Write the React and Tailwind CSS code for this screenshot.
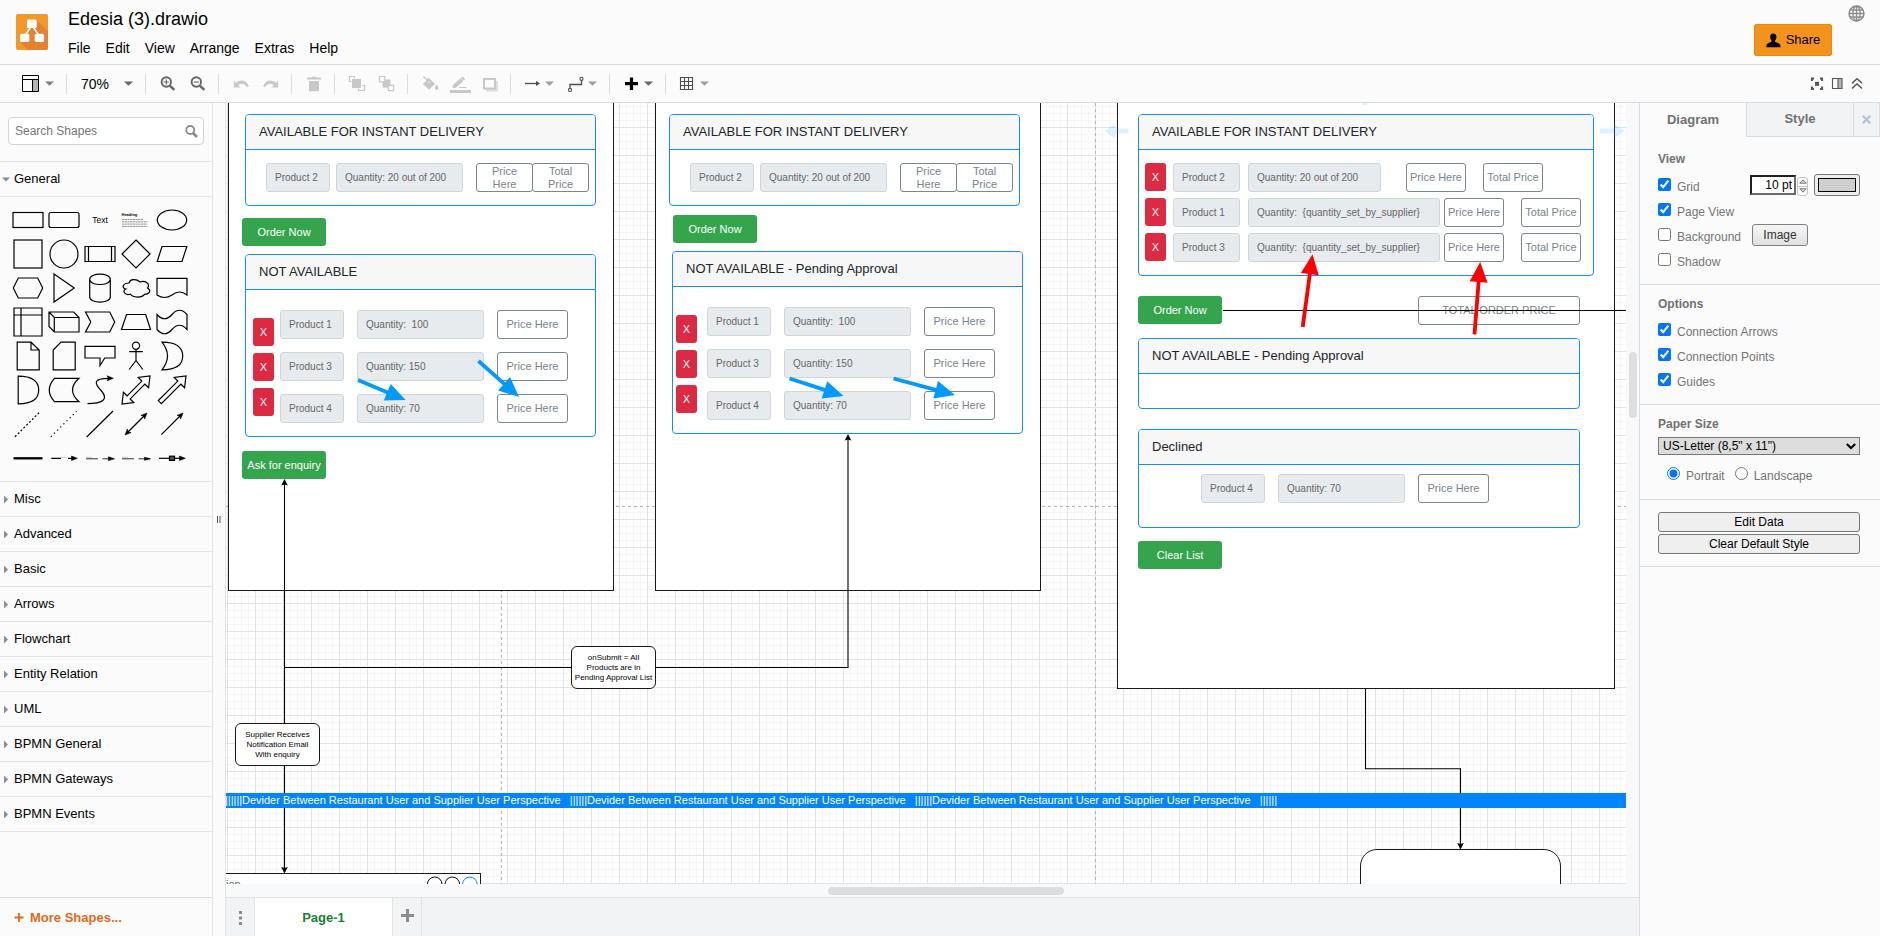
import React from "react";

/* ---------- small shared pieces ---------- */

function Caret({ className = "text-[#808080]" }) {
  return (
    <svg width="9" height="5" viewBox="0 0 9 5" className={className} aria-hidden="true">
      <path d="M0 0.5H9L4.5 4.8Z" fill="currentColor" />
    </svg>
  );
}

function Icon({ children, className = "text-[#666666]" }) {
  return (
    <svg width="16" height="16" viewBox="0 0 16 16" className={`shrink-0 overflow-visible ${className}`} fill="none" stroke="currentColor" aria-hidden="true">
      {children}
    </svg>
  );
}

/* ---------- header ---------- */

function Logo() {
  return (
    <svg width="32" height="36" viewBox="0 0 32 36" aria-hidden="true">
      <rect width="32" height="36" rx="2" fill="#f2992b" />
      <path d="M20.5 6L32 17.5V34a2 2 0 0 1-2 2H12L4.5 28.2L13 20L12 14Z" fill="#e5812f" />
      <path d="M14.8 13L9 21.5M17.2 13L23 21.5" stroke="#fff" strokeWidth="1.7" />
      <rect x="11" y="5.5" width="9.8" height="8.6" rx="1.6" fill="#fff" />
      <rect x="4" y="19.8" width="9.4" height="8.2" rx="1.6" fill="#fff" />
      <rect x="18.7" y="19.8" width="9.4" height="8.2" rx="1.6" fill="#fff" />
    </svg>
  );
}

function Header() {
  return (
    <header className="flex h-[65px] shrink-0 items-start border-b border-[#dadce0] bg-[#fbfbfb]">
      <div className="pl-4 pt-[14px]">
        <Logo />
      </div>
      <div className="pl-5 pt-2">
        <h1 className="text-[18px] leading-[22px] text-black">Edesia (3).drawio</h1>
        <nav className="mt-[9px] flex gap-[15px] text-sm leading-[18px] text-black">
          {["File", "Edit", "View", "Arrange", "Extras", "Help"].map((m) => (
            <button key={m} type="button">{m}</button>
          ))}
        </nav>
      </div>
      <div className="ml-auto flex pr-[15px]">
        <button type="button" className="mt-6 flex h-8 w-[78px] items-center justify-center gap-[5px] rounded-[2px] border border-[#f08705] bg-[#f2931e] text-[13px] text-black">
          <svg width="15" height="15" viewBox="0 0 15 15" aria-hidden="true">
            <path d="M7.3 0.4C9.4 0.4 10.5 2 10.4 4.2C10.3 6 9.6 7 9 7.8V8.8C10 9.6 14.4 10 14.4 12.6V14.3H0.4V12.6C0.4 10 4.8 9.6 5.7 8.8V7.8C5 7 4.3 6 4.2 4.2C4.1 2 5.2 0.4 7.3 0.4Z" fill="#000" />
          </svg>
          <span>Share</span>
        </button>
        <button type="button" aria-label="Language" className="mt-[5px] ml-4 h-[17px] text-[#8c8c8c]">
          <svg width="17" height="17" viewBox="0 0 17 17" fill="none" stroke="currentColor" strokeWidth="1.3" aria-hidden="true">
            <circle cx="8.5" cy="8.5" r="7.4" strokeWidth="1.6" />
            <ellipse cx="8.5" cy="8.5" rx="3.6" ry="7.4" />
            <path d="M8.5 1V16M1 8.5H16M2.3 5H14.7M2.3 12H14.7" />
          </svg>
        </button>
      </div>
    </header>
  );
}

/* ---------- toolbar ---------- */

function Group({ children, last }) {
  return (
    <div className={`flex h-5 items-center gap-[14px] pl-[14px] pr-3 ${last ? "" : "border-r border-[#dadce0]"}`}>{children}</div>
  );
}

function ToolButton({ label, children }) {
  return (
    <button type="button" aria-label={label} className="flex w-4 items-center justify-center">{children}</button>
  );
}

function MenuButton({ label, children, caret }) {
  return (
    <button type="button" aria-label={label} className="flex w-[29px] items-center justify-between">
      {children}
      <Caret className={caret} />
    </button>
  );
}

function Toolbar() {
  const off = "text-[#c8c8c8]";
  return (
    <div className="flex h-[38px] shrink-0 items-center border-b border-[#dadce0] bg-[#fbfbfb]">
      <div className="flex h-5 items-center border-r border-[#dadce0] pl-[22px] pr-3">
        <button type="button" aria-label="View" className="flex w-8 items-center justify-between">
          <svg width="17" height="17" viewBox="0 0 17 17" aria-hidden="true">
            <rect x="10.5" y="4" width="6" height="12.5" fill="#b3b3b3" />
            <path d="M0.5 0.5H16.5V16.5H0.5ZM0.5 4.5H16.5M10.5 4.5V16.5" fill="none" stroke="#000" />
          </svg>
          <Caret />
        </button>
      </div>
      <div className="flex h-5 items-center border-r border-[#dadce0] pl-[14px] pr-3">
        <button type="button" className="flex w-[52px] items-center justify-between text-sm text-black">
          <span>70%</span>
          <Caret className="text-[#666666]" />
        </button>
      </div>
      <Group>
        <ToolButton label="Zoom In">
          <Icon>
            <circle cx="6.3" cy="6" r="4.7" strokeWidth="1.9" />
            <path d="M10 9.8L14.3 13.9" strokeWidth="2.5" />
            <path d="M3.8 6H8.8M6.3 3.5V8.5" strokeWidth="1.1" />
          </Icon>
        </ToolButton>
        <ToolButton label="Zoom Out">
          <Icon>
            <circle cx="6.3" cy="6" r="4.7" strokeWidth="1.9" />
            <path d="M10 9.8L14.3 13.9" strokeWidth="2.5" />
            <path d="M3.8 6H8.8" strokeWidth="1.1" />
          </Icon>
        </ToolButton>
      </Group>
      <Group>
        <ToolButton label="Undo">
          <Icon className={off}>
            <path d="M0.8 4.5L3 6.8C7 3.2 13.4 3.8 15.8 10.2L13.9 11C12 7.4 8 6.6 5.2 9.2L7.6 11.5H0.8Z" fill="currentColor" stroke="none" />
          </Icon>
        </ToolButton>
        <ToolButton label="Redo">
          <Icon className={off}>
            <path d="M15.2 4.5L13 6.8C9 3.2 2.6 3.8 0.2 10.2L2.1 11C4 7.4 8 6.6 10.8 9.2L8.4 11.5H15.2Z" fill="currentColor" stroke="none" />
          </Icon>
        </ToolButton>
      </Group>
      <Group>
        <ToolButton label="Delete">
          <Icon className={off}>
            <path d="M6 0.8H10L10.6 1.6H15V3.6H1V1.6H5.4ZM3 5H13V15.2H3Z" fill="currentColor" stroke="none" />
          </Icon>
        </ToolButton>
      </Group>
      <Group>
        <ToolButton label="To Front">
          <Icon className={off}>
            <path d="M5.5 2.5V0.5H0.5V5.5H2.5M13 9.5H15.5V14.5H9.5V12.5" strokeWidth="1.2" />
            <rect x="3" y="3" width="9" height="9" fill="currentColor" stroke="none" />
          </Icon>
        </ToolButton>
        <ToolButton label="To Back">
          <Icon className={off}>
            <path d="M3.5 3.5H11.5V11.5H3.5Z" fill="currentColor" stroke="none" />
            <path d="M0.5 0.5H5.8V5.8H0.5ZM9.3 9.3H14.6V14.6H9.3Z" fill="#fbfbfb" strokeWidth="1.2" />
          </Icon>
        </ToolButton>
      </Group>
      <Group>
        <ToolButton label="Fill Color">
          <Icon className={off}>
            <path d="M0.8 8L7.2 2.2L13 8L7 13.6Z" fill="currentColor" stroke="none" />
            <path d="M1.5 0.5L7.2 6.4M4.5 5L7 2.2" strokeWidth="1.3" />
            <path d="M6 5.4L7.6 7" stroke="#fbfbfb" />
            <path d="M14.6 8.6C15.6 10.2 16.4 11 16.4 12A1.8 1.8 0 0 1 12.8 12C12.8 11 13.6 10.2 14.6 8.6Z" fill="currentColor" stroke="none" />
          </Icon>
        </ToolButton>
        <ToolButton label="Line Color">
          <Icon className={off}>
            <path d="M0.8 12V9.3L10.5 0.6L13.2 3.2L3.6 12Z" fill="currentColor" stroke="none" />
            <path d="M8.4 2L12 5.4" stroke="#fbfbfb" strokeWidth="0.8" />
            <path d="M7 11.5H14.5" />
            <path d="M-2 15.5H19" strokeWidth="3" />
          </Icon>
        </ToolButton>
        <ToolButton label="Shadow">
          <Icon className={off}>
            <path d="M13.5 5H16V15.5H4V13H13.5Z" fill="#dedede" stroke="none" />
            <rect x="2" y="3" width="11" height="9.5" strokeWidth="2" />
          </Icon>
        </ToolButton>
      </Group>
      <Group>
        <MenuButton label="Connection" caret="text-[#9f9f9f]">
          <Icon className="text-[#4d4d4d]">
            <path d="M0 7.5H12" strokeWidth="1.3" />
            <path d="M11 5L15 7.5L11 10Z" fill="currentColor" stroke="none" />
          </Icon>
        </MenuButton>
        <MenuButton label="Waypoints" caret="text-[#9f9f9f]">
          <Icon className="text-[#4d4d4d]">
            <path d="M2 13V8.5H13.5V4" strokeWidth="1.3" />
            <path d="M0.6 12.6H3.4V15.4H0.6ZM12.1 1.4H14.9V4.2H12.1Z" />
          </Icon>
        </MenuButton>
      </Group>
      <Group>
        <MenuButton label="Insert" caret="text-[#666666]">
          <Icon className="text-black">
            <path d="M7.5 1.5V14M1 7.7H14" strokeWidth="3.2" />
          </Icon>
        </MenuButton>
      </Group>
      <Group last>
        <MenuButton label="Table" caret="text-[#9f9f9f]">
          <Icon className="text-[#4d4d4d]">
            <path d="M0.5 1.5H12.5V13.5H0.5ZM0.5 5.5H12.5M0.5 9.5H12.5M4.5 1.5V13.5M8.5 1.5V13.5" strokeWidth="1.1" />
          </Icon>
        </MenuButton>
      </Group>
      <div className="ml-auto flex items-center gap-1 pr-[15px]">
        <ToolButton label="Fullscreen">
          <Icon className="text-[#555555]">
            <path d="M5 2.5H2.9V5M11 2.5H13.1V5M5 13H2.9V10.5M11 13H13.1V10.5" strokeWidth="2" />
            <rect x="6" y="5.8" width="4" height="4" fill="currentColor" stroke="none" />
          </Icon>
        </ToolButton>
        <ToolButton label="Format Panel">
          <Icon className="text-[#555555]">
            <rect x="9" y="2.5" width="4" height="10" fill="#b8b8b8" stroke="none" />
            <path d="M3.5 2.5H13V12.5H3.5ZM9 2.5V12.5" strokeWidth="1.1" />
          </Icon>
        </ToolButton>
        <ToolButton label="Collapse">
          <Icon className="text-[#555555]">
            <path d="M3 7.2L8 2.7L13 7.2M3 12.5L8 8L13 12.5" strokeWidth="1.5" />
          </Icon>
        </ToolButton>
      </div>
    </div>
  );
}

/* ---------- left shape library ---------- */

const heads = { fill: "#000", strokeWidth: 0.6 };

const shapes = [
  ["Rectangle", <rect x="-15" y="-7.5" width="30" height="15" />],
  ["Rounded Rectangle", <rect x="-15" y="-7.5" width="30" height="15" rx="2" />],
  ["Text", <text x="0" y="3" textAnchor="middle" fontSize="8.5" fill="#000" stroke="none">Text</text>],
  ["Textbox", <g>
    <text x="-14.5" y="-4.5" fontSize="4" fontWeight="bold" fill="#000" stroke="none">Heading</text>
    <path d="M-14 -0.5H7.5M-14 1.8H11.5M-14 4.1H11M-14 6.4H11.5" stroke="#777" strokeWidth="0.8" strokeDasharray="2.2 0.5" />
  </g>],
  ["Ellipse", <ellipse rx="14.7" ry="10" />],
  ["Square", <rect x="-14" y="-14" width="28" height="28" />],
  ["Circle", <circle r="14" />],
  ["Process", <path d="M-15 -7.5H15V7.5H-15ZM-11.5 -7.5V7.5M11.5 -7.5V7.5" />],
  ["Diamond", <path d="M0 -14L14 0L0 14L-14 0Z" />],
  ["Parallelogram", <path d="M-10 -7.5H14.8L10 7.5H-14.8Z" />],
  ["Hexagon", <path d="M-9.7 -10H9.7L14.7 0L9.7 10H-9.7L-14.7 0Z" />],
  ["Triangle", <path d="M-10 -14L10.3 0L-10 14Z" />],
  ["Cylinder", <path d="M-10.3 -8.7C-10.3 -15.5 10.3 -15.5 10.3 -8.7V9C10.3 15.7 -10.3 15.7 -10.3 9ZM-10.3 -8.7C-10.3 -1.8 10.3 -1.8 10.3 -8.7" />],
  ["Cloud", <path d="M-7 -5C-13 -5 -15 0 -10.2 1C-15 3.2 -9.6 8 -5.7 6C-3 10 6 10 8.5 6.3C14.5 6 15 2 11.5 0C15 -4 9 -8 4 -6C0 -9.5 -6 -9 -7 -5Z" />],
  ["Document", <path d="M-15 -9.7H15V7Q7.5 1 0 7Q-7.5 12 -15 7Z" />],
  ["Internal Storage", <path d="M-14 -14H14V14H-14ZM-14 -7H14M-7 -14V14" />],
  ["Cube", <path d="M-15 -10H9.7L15 -4.5V10H-9.7L-15 4.5ZM-15 -10L-9.7 -4.5H15M-9.7 -4.5V10" />],
  ["Step", <path d="M-14.5 -10H9.7L14.7 0L9.7 10H-14.5L-9.2 0Z" />],
  ["Trapezoid", <path d="M-9.5 -7.5H9.7L14.5 7.5H-14.5Z" />],
  ["Tape", <path d="M-15 -7.5Q-7.5 1 0 -7.5Q7.5 -16 15 -7.5V7.5Q7.5 -1 0 7.5Q-7.5 16 -15 7.5Z" />],
  ["Note", <path d="M-10.8 -13.8H3L11.2 -6V13.8H-10.8ZM3 -13.8V-6H11.2" />],
  ["Card", <path d="M-3 -13.8H11.2V13.8H-10.8V-6Z" />],
  ["Callout", <path d="M-15 -9.7H15V2H4.7L0 9.7V2H-15Z" />],
  ["Actor", <path d="M0 -6.7V4.5M-6.8 -4.3H6.8M0 4.5L-6.8 13.5M0 4.5L6.8 13.5M3.6 -10.3A3.6 3.6 0 1 1 -3.6 -10.3A3.6 3.6 0 1 1 3.6 -10.3" />],
  ["Or", <path d="M-10 -13.8Q10.7 -13.8 10.7 0Q10.7 13.8 -10 13.8Q1 0 -10 -13.8Z" />],
  ["And", <path d="M-9.8 -13.8Q10.7 -13.8 10.7 0Q10.7 13.8 -9.8 13.8Z" />],
  ["Data Storage", <path d="M-9.5 -11.7H15Q2 0 15 11.7H-9.5Q-20 0 -9.5 -11.7Z" />],
  ["Curve", <g>
    <path d="M-12.5 13.7C2 13.7 9 9.5 1.5 1C-6 -7 -7 -11.7 9 -11.7" />
    <path d="M7 -14.2L13.3 -11.7L7 -9.2L8.5 -11.7Z" {...heads} />
  </g>],
  ["Bidirectional Arrow", <path d="M14 -14L12.6 -2.2L8.9 -5.8L-5.8 8.9L-2.2 12.6L-14 14L-12.6 2.2L-8.9 5.8L5.8 -8.9L2.2 -12.6Z" />],
  ["Arrow", <path d="M14 -14L12.6 -2.2L8.9 -5.8L-10.6 13.7L-13.7 10.6L5.8 -8.9L2.2 -12.6Z" />],
  ["Dashed Line", <path d="M-13 12.7L12.5 -12.7" strokeDasharray="2 2" />],
  ["Dotted Line", <path d="M-13 12.7L12.5 -12.7" strokeDasharray="1.2 3.2" />],
  ["Line", <path d="M-13.3 13L13 -13" />],
  ["Bidirectional Connector", <g>
    <path d="M-9 9L9 -9" />
    <path d="M11 -11L5 -8.6L8 -8L8.6 -5ZM-11 11L-5 8.6L-8 8L-8.6 5Z" {...heads} />
  </g>],
  ["Directional Connector", <g>
    <path d="M-10.7 10.7L9 -9" />
    <path d="M11 -11L5 -8.6L8 -8L8.6 -5Z" {...heads} />
  </g>],
  ["Link", <path d="M-14.5 0.3H14.5" strokeWidth="2.4" />],
  ["Connector with Label", <g>
    <path d="M-12.7 0.3H-3M4 0.3H9" />
    <path d="M-2.5 -0.6H3.5" stroke="#aaa" strokeDasharray="1 1" />
    <path d="M7.5 -1.9L13.3 0.3L7.5 2.5Z" {...heads} />
  </g>],
  ["Connector with 2 Labels", <g>
    <path d="M-14 0.8H-2M2.5 0.8H10" strokeWidth="1" stroke="#333" />
    <path d="M-13.5 -0.6H-8" stroke="#aaa" strokeDasharray="1 1" />
    <path d="M8.5 -1.2L14.5 0.8L8.5 2.6Z" {...heads} />
  </g>],
  ["Connector with 3 Labels", <g>
    <path d="M-14 0.8H-2M2.5 0.8H10" strokeWidth="1" stroke="#333" />
    <path d="M-13.5 -0.6H-8M9 2H14" stroke="#aaa" strokeDasharray="1 1" />
    <path d="M8.5 -0.8L14.5 0.8L8.5 2.2Z" {...heads} />
  </g>],
  ["Connector with Symbol", <g>
    <path d="M-13 0.3H10" />
    <rect x="-2.5" y="-1.8" width="5" height="4.2" fill="#555" />
    <path d="M7.5 -1.9L13.3 0.3L7.5 2.5Z" {...heads} />
  </g>],
];

function Sidebar() {
  const sections = ["Misc", "Advanced", "Basic", "Arrows", "Flowchart", "Entity Relation", "UML", "BPMN General", "BPMN Gateways", "BPMN Events"];
  return (
    <aside className="flex w-[213px] shrink-0 flex-col border-r border-[#e2e3e5] bg-[#fbfbfb]">
      <div className="border-b border-[#e2e3e5] px-2 pb-4 pt-[14px]">
        <div className="flex h-7 items-center rounded border border-[#d5d5d5] bg-white pl-[6px] pr-[5px]">
          <input type="text" aria-label="Search Shapes" placeholder="Search Shapes" className="h-full min-w-0 flex-1 bg-transparent text-xs text-black outline-none placeholder:text-[#757575]" />
          <svg width="13" height="13" viewBox="0 0 13 13" fill="none" stroke="#8c8c8c" aria-hidden="true">
            <circle cx="5.2" cy="5" r="4" strokeWidth="1.8" />
            <path d="M8 8L12 12" strokeWidth="2.6" />
          </svg>
        </div>
      </div>
      <button type="button" className="flex h-[35px] items-center border-b border-[#e2e3e5] pl-[2px] text-left text-[13px] text-black">
        <svg width="12" height="5" viewBox="0 0 12 5" aria-hidden="true"><path d="M0 0.5H8L4 4.5Z" fill="#8c8c8c" /></svg>
        General
      </button>
      <div className="grid grid-cols-[repeat(5,36px)] border-b border-[#e2e3e5] pb-[6px] pl-[10px] pt-[6px]">
        {shapes.map(([name, art]) => (
          <button key={name} type="button" aria-label={name} className="flex h-[34px] items-center justify-center">
            <svg width="34" height="34" viewBox="-17 -17 34 34" fill="none" stroke="#000" strokeWidth="1.2" className="shrink-0" aria-hidden="true">{art}</svg>
          </button>
        ))}
      </div>
      {sections.map((s) => (
        <button key={s} type="button" className="flex h-[35px] items-center border-b border-[#e2e3e5] pl-1 text-left text-[13px] text-black">
          <svg width="10" height="9" viewBox="0 0 10 9" aria-hidden="true"><path d="M0 0.5L4 4.5L0 8.5Z" fill="#8c8c8c" /></svg>
          {s}
        </button>
      ))}
      <button type="button" className="mt-auto flex h-[39px] items-center gap-[6px] border-t border-[#dadce0] pl-[14px] pt-px text-[13px] font-bold text-[#dd6b1a]">
        <svg width="10" height="10" viewBox="0 0 10 10" aria-hidden="true"><path d="M5 0V9M0.5 4.5H9.5" stroke="currentColor" strokeWidth="1.8" /></svg>
        More Shapes...
      </button>
    </aside>
  );
}

/* ---------- canvas nodes ---------- */

function Frame({ className }) {
  return <div className={`absolute border border-[#1a1a1a] bg-white ${className}`} />;
}

function Card({ title, className }) {
  return (
    <section className={`absolute overflow-hidden rounded border border-[#168bff] bg-white ${className}`}>
      <h2 className="flex h-[35px] items-center border-b border-[#168bff] bg-[#f7f7f7] pl-[13px] text-[13px] text-[#212529]">{title}</h2>
    </section>
  );
}

function Field({ children, className }) {
  return (
    <div className={`absolute flex h-[29px] items-center whitespace-pre rounded-[3px] border border-[#d0d6dc] bg-[#e8ebee] pl-2 text-[10px] text-[#666666] ${className}`}>{children}</div>
  );
}

function Outline({ children, className }) {
  return (
    <div className={`absolute flex h-[29px] items-center justify-center rounded-[3px] border border-[#7d858c] bg-white text-center text-[11px] leading-[13px] text-[#7a828a] ${className}`}>{children}</div>
  );
}

function Green({ children, className }) {
  return (
    <div className={`absolute flex h-[28px] items-center justify-center whitespace-nowrap rounded-[3px] bg-[#34a54c] text-[11px] text-white ${className}`}>{children}</div>
  );
}

function Remove({ className }) {
  return (
    <div className={`absolute flex h-[28px] w-[21px] items-center justify-center rounded-[3px] bg-[#dc2a43] text-[11px] text-white ${className}`}>X</div>
  );
}

function Note({ children, className }) {
  return (
    <div className={`absolute flex h-[43px] w-[85px] items-center justify-center whitespace-pre rounded-md border border-[#1a1a1a] bg-white text-center text-[8px] leading-[10px] text-black ${className}`}>{children}</div>
  );
}

/* Thick connector with a solid triangular head, from (x1, y1) to (x2, y2). */
function BoldArrow({ x1, y1, x2, y2, color }) {
  const len = Math.hypot(x2 - x1, y2 - y1);
  const ux = (x2 - x1) / len;
  const uy = (y2 - y1) / len;
  const bx = x2 - ux * 20;
  const by = y2 - uy * 20;
  return (
    <g>
      <line x1={x1} y1={y1} x2={bx + ux} y2={by + uy} stroke={color} strokeWidth="3.8" />
      <polygon points={`${x2},${y2} ${bx - uy * 9},${by + ux * 9} ${bx + uy * 9},${by - ux * 9}`} fill={color} />
    </g>
  );
}

function Canvas() {
  return (
    <div className="relative min-w-0 flex-1 overflow-hidden bg-white bg-[linear-gradient(to_right,#e3e3e3_1px,transparent_1px),linear-gradient(to_bottom,#e3e3e3_1px,transparent_1px),linear-gradient(to_right,#f6f6f6_1px,transparent_1px),linear-gradient(to_bottom,#f6f6f6_1px,transparent_1px)] bg-[size:28px_28px,28px_28px,7px_7px,7px_7px] bg-[position:1px_0px,0px_24px,1px_0px,0px_3px]">
      <svg className="absolute inset-0 h-full w-full" aria-hidden="true">
        <path d="M275.5 0V781M869.5 0V781M0 403.5H1400" fill="none" stroke="#b5b5b5" strokeDasharray="3 3" />
      </svg>

      <Frame className="left-[2px] -top-5 h-[508px] w-[386px]" />
      <Frame className="left-[429px] -top-5 h-[508px] w-[386px]" />
      <Frame className="left-[891px] -top-5 h-[606px] w-[498px]" />

      {/* first screen */}
      <Card title="AVAILABLE FOR INSTANT DELIVERY" className="left-[19px] top-[11px] h-[92px] w-[351px]" />
      <Field className="left-[40px] top-[60px] w-[64px]">Product 2</Field>
      <Field className="left-[110px] top-[60px] w-[127px]">Quantity: 20 out of 200</Field>
      <Outline className="left-[250px] top-[60px] w-[57px]">Price<br />Here</Outline>
      <Outline className="left-[306px] top-[60px] w-[57px]">Total<br />Price</Outline>
      <Green className="left-[16px] top-[115px] w-[84px]">Order Now</Green>
      <Card title="NOT AVAILABLE" className="left-[19px] top-[151px] h-[183px] w-[351px]" />
      <Remove className="left-[27px] top-[215px]" />
      <Remove className="left-[27px] top-[250px]" />
      <Remove className="left-[27px] top-[285px]" />
      <Field className="left-[54px] top-[207px] w-[64px]">Product 1</Field>
      <Field className="left-[131px] top-[207px] w-[127px]">Quantity:  100</Field>
      <Outline className="left-[271px] top-[207px] w-[71px]">Price Here</Outline>
      <Field className="left-[54px] top-[249px] w-[64px]">Product 3</Field>
      <Field className="left-[131px] top-[249px] w-[127px]">Quantity: 150</Field>
      <Outline className="left-[271px] top-[249px] w-[71px]">Price Here</Outline>
      <Field className="left-[54px] top-[291px] w-[64px]">Product 4</Field>
      <Field className="left-[131px] top-[291px] w-[127px]">Quantity: 70</Field>
      <Outline className="left-[271px] top-[291px] w-[71px]">Price Here</Outline>
      <Green className="left-[16px] top-[348px] w-[84px]">Ask for enquiry</Green>

      {/* second screen */}
      <Card title="AVAILABLE FOR INSTANT DELIVERY" className="left-[443px] top-[11px] h-[92px] w-[351px]" />
      <Field className="left-[464px] top-[60px] w-[64px]">Product 2</Field>
      <Field className="left-[534px] top-[60px] w-[127px]">Quantity: 20 out of 200</Field>
      <Outline className="left-[674px] top-[60px] w-[57px]">Price<br />Here</Outline>
      <Outline className="left-[730px] top-[60px] w-[57px]">Total<br />Price</Outline>
      <Green className="left-[447px] top-[112px] w-[84px]">Order Now</Green>
      <Card title="NOT AVAILABLE - Pending Approval" className="left-[446px] top-[148px] h-[183px] w-[351px]" />
      <Remove className="left-[450px] top-[212px]" />
      <Remove className="left-[450px] top-[247px]" />
      <Remove className="left-[450px] top-[282px]" />
      <Field className="left-[481px] top-[204px] w-[64px]">Product 1</Field>
      <Field className="left-[558px] top-[204px] w-[127px]">Quantity:  100</Field>
      <Outline className="left-[698px] top-[204px] w-[71px]">Price Here</Outline>
      <Field className="left-[481px] top-[246px] w-[64px]">Product 3</Field>
      <Field className="left-[558px] top-[246px] w-[127px]">Quantity: 150</Field>
      <Outline className="left-[698px] top-[246px] w-[71px]">Price Here</Outline>
      <Field className="left-[481px] top-[288px] w-[64px]">Product 4</Field>
      <Field className="left-[558px] top-[288px] w-[127px]">Quantity: 70</Field>
      <Outline className="left-[698px] top-[288px] w-[71px]">Price Here</Outline>

      {/* third screen */}
      <Card title="AVAILABLE FOR INSTANT DELIVERY" className="left-[912px] top-[11px] h-[162px] w-[456px]" />
      <Remove className="left-[919px] top-[60px]" />
      <Remove className="left-[919px] top-[95px]" />
      <Remove className="left-[919px] top-[130px]" />
      <Field className="left-[947px] top-[60px] w-[67px]">Product 2</Field>
      <Field className="left-[1022px] top-[60px] w-[133px]">Quantity: 20 out of 200</Field>
      <Outline className="left-[1180px] top-[60px] w-[60px]">Price Here</Outline>
      <Outline className="left-[1257px] top-[60px] w-[60px]">Total Price</Outline>
      <Field className="left-[947px] top-[95px] w-[67px]">Product 1</Field>
      <Field className="left-[1022px] top-[95px] w-[192px]">Quantity:  {"{quantity_set_by_supplier}"}</Field>
      <Outline className="left-[1218px] top-[95px] w-[60px]">Price Here</Outline>
      <Outline className="left-[1295px] top-[95px] w-[60px]">Total Price</Outline>
      <Field className="left-[947px] top-[130px] w-[67px]">Product 3</Field>
      <Field className="left-[1022px] top-[130px] w-[192px]">Quantity:  {"{quantity_set_by_supplier}"}</Field>
      <Outline className="left-[1218px] top-[130px] w-[60px]">Price Here</Outline>
      <Outline className="left-[1295px] top-[130px] w-[60px]">Total Price</Outline>
      <Green className="left-[912px] top-[193px] w-[84px]">Order Now</Green>
      <Outline className="left-[1192px] top-[193px] w-[162px]">TOTAL ORDER PRICE</Outline>
      <Card title="NOT AVAILABLE - Pending Approval" className="left-[912px] top-[235px] h-[71px] w-[442px]" />
      <Card title="Declined" className="left-[912px] top-[326px] h-[99px] w-[442px]" />
      <Field className="left-[975px] top-[371px] w-[64px]">Product 4</Field>
      <Field className="left-[1052px] top-[371px] w-[127px]">Quantity: 70</Field>
      <Outline className="left-[1192px] top-[371px] w-[71px]">Price Here</Outline>
      <Green className="left-[912px] top-[438px] w-[84px]">Clear List</Green>

      {/* partly visible supplier windows along the bottom edge */}
      <div className="absolute -left-5 top-[770px] h-[60px] w-[275px] border border-[#1a1a1a] bg-white pl-[19px] pt-[3px] text-[11px] leading-[14px] text-[#666666]">ion</div>
      <div className="absolute left-[1134px] top-[746px] h-[80px] w-[201px] rounded-[17px] border border-[#1a1a1a] bg-white" />

      {/* connectors */}
      <svg className="absolute inset-0 h-full w-full" aria-hidden="true">
        <g fill="none" stroke="#000" strokeWidth="1.1">
          <path d="M58.5 378V768M58.5 564.5H622V334" />
          <path d="M997 207.5H1400" />
          <path d="M1139.5 586V665.8H1234.5V744" />
        </g>
        <g fill="#000">
          <path d="M58.5 376L61.8 382.5L58.5 381.5L55.2 382.5Z" />
          <path d="M58.5 770.5L61.8 764L58.5 765L55.2 764Z" />
          <path d="M622 331L625.3 337.5L622 336.5L618.7 337.5Z" />
          <path d="M1234.5 746.5L1237.8 740L1234.5 741L1231.2 740Z" />
        </g>
        <g fill="#fff">
          <circle cx="208.7" cy="781.3" r="7.3" stroke="#000" />
          <circle cx="226.3" cy="781.3" r="7.3" stroke="#000" />
          <circle cx="243.8" cy="781.3" r="7.3" stroke="#0085ff" />
        </g>
        <BoldArrow x1={132} y1={277} x2={179.7} y2={297} color="#0099ff" />
        <BoldArrow x1={252.5} y1={258} x2={293} y2={294} color="#0099ff" />
        <BoldArrow x1={563.5} y1={275.5} x2={617.5} y2={293} color="#0099ff" />
        <BoldArrow x1={667.5} y1={275.5} x2={729} y2={292} color="#0099ff" />
        <BoldArrow x1={1076.7} y1={224} x2={1086.5} y2={151.3} color="#ff0000" />
        <BoldArrow x1={1248.5} y1={231.3} x2={1254.2} y2={159} color="#ff0000" />
        <g fill="#29b6f2" fillOpacity="0.17">
          <path d="M878.5 28L889 20.5V25.5H902.5V30.5H889V35.5Z" />
          <path d="M1398.3 28L1388 20.5V25.5H1374V30.5H1388V35.5Z" />
          <path d="M1136.5 0H1141.5V2H1136.5Z" />
        </g>
      </svg>

      <Note className="left-[9px] top-[620px]">{"Supplier Receives\nNotification Email\nWith enquiry"}</Note>
      <Note className="left-[345px] top-[543px]">{"onSubmit = All\nProducts are in\nPending Approval List"}</Note>

      <div className="absolute -left-px right-0 top-[690px] flex h-[15px] items-center overflow-hidden whitespace-nowrap bg-[#0085ff] text-[11px] leading-[15px] text-white">
        <span className="w-[17px] shrink-0">||||||</span>
        {[0, 1, 2].map((i) => (
          <span key={i} className="flex w-[345px] shrink-0 justify-between">
            <span>Devider Between Restaurant User and Supplier User Perspective</span>
            <span>||||||</span>
          </span>
        ))}
      </div>
    </div>
  );
}

function Workspace() {
  return (
    <main className="flex min-w-0 flex-1 flex-col bg-[#f8f9fb]">
      <div className="flex min-h-0 flex-1">
        <Canvas />
        <div className="w-[13px] shrink-0 pl-[3px] pt-[249px]">
          <div className="h-[66px] w-2 rounded bg-[#dcdee0]" />
        </div>
      </div>
      <div className="flex h-[13px] shrink-0 justify-center pt-[3px]">
        <div className="ml-[26px] h-2 w-[236px] rounded bg-[#dcdee0]" />
      </div>
      <footer className="flex h-[39px] shrink-0 border-t border-[#e2e3e5] bg-[#f1f3f4]">
        <button type="button" aria-label="Pages" className="flex w-[29px] items-center justify-center border-r border-[#e2e3e5] pt-px">
          <svg width="3" height="14" viewBox="0 0 3 14" fill="#8c8c8c" aria-hidden="true"><path d="M0 0H3V3H0ZM0 5.5H3V8.5H0ZM0 11H3V14H0Z" /></svg>
        </button>
        <button type="button" className="w-[138px] border-r border-[#e2e3e5] bg-white pt-px text-[13px] font-bold text-[#188038]">Page-1</button>
        <button type="button" aria-label="Insert Page" className="flex w-[29px] items-center justify-center border-r border-[#e2e3e5] pb-1">
          <svg width="13" height="13" viewBox="0 0 13 13" stroke="#8c8c8c" strokeWidth="3" aria-hidden="true"><path d="M6.5 0V13M0 6.5H13" /></svg>
        </button>
      </footer>
    </main>
  );
}

/* ---------- format panel ---------- */

function Section({ title, children, className = "" }) {
  return (
    <section className={`border-b border-[#dadce0] pl-[18px] pr-5 ${className}`}>
      {title && <h3 className="h-4 text-xs font-bold leading-4 text-[#707070]">{title}</h3>}
      {children}
    </section>
  );
}

function Check({ id, label, checked, children }) {
  return (
    <div className="flex h-[25px] items-center">
      <input id={id} type="checkbox" defaultChecked={checked} className="h-[13px] w-[13px]" />
      <label htmlFor={id} className="pl-[6px] pt-1 text-xs text-[#757575]">{label}</label>
      {children}
    </div>
  );
}

function FormatPanel() {
  return (
    <aside className="w-[241px] shrink-0 border-l border-[#dadce0] bg-[#fbfbfb]">
      <div className="flex h-[34px] text-[13px] font-bold text-[#707070]">
        <button type="button" className="w-[106px]">Diagram</button>
        <button type="button" className="flex-1 border-b border-l border-[#dadce0] bg-[#f1f3f4] pb-px">Style</button>
        <button type="button" aria-label="Close" className="flex w-[27px] items-center justify-center border border-t-0 border-[#dadce0] bg-[#f1f3f4] pb-px">
          <svg width="9" height="9" viewBox="0 0 9 9" stroke="#b4c2d6" strokeWidth="2.2" aria-hidden="true"><path d="M0.8 0.8L8.2 8.2M8.2 0.8L0.8 8.2" /></svg>
        </button>
      </div>
      <Section title="View" className="pb-3 pt-[14px]">
        <div className="mt-[5px]">
          <Check id="grid" label="Grid" checked>
            <div className="ml-auto flex items-center">
              <input type="text" aria-label="Grid Size" defaultValue="10 pt" className="h-5 w-[46px] border-2 border-b-[#6b6b6b] border-l-[#1f1f1f] border-r-[#6b6b6b] border-t-[#1f1f1f] bg-white pr-[2px] text-right text-xs text-black outline-none" />
              <span className="ml-px mt-[3px] flex h-[19px] w-[11px] flex-col rounded-[3px] border border-[#c4c4c4] bg-white">
                <button type="button" aria-label="Increase" className="flex flex-1 items-center justify-center border-b border-[#c4c4c4]">
                  <svg width="8" height="5" viewBox="0 0 8 5" aria-hidden="true"><path d="M0.7 4.2H7.3L4 0.8Z" fill="#ddd" stroke="#666" strokeWidth="0.9" /></svg>
                </button>
                <button type="button" aria-label="Decrease" className="flex flex-1 items-center justify-center">
                  <svg width="8" height="5" viewBox="0 0 8 5" aria-hidden="true"><path d="M0.7 0.8H7.3L4 4.2Z" fill="#ddd" stroke="#666" strokeWidth="0.9" /></svg>
                </button>
              </span>
              <button type="button" aria-label="Grid Color" className="ml-[6px] h-[22px] w-[46px] rounded-[3px] border border-[#767676] bg-[#efefef] p-[3px]">
                <span className="block h-full border border-black bg-[#cfcfcf]" />
              </button>
            </div>
          </Check>
          <Check id="page-view" label="Page View" checked />
          <Check id="background" label="Background">
            <button type="button" className="ml-auto mr-[52px] h-[22px] w-[56px] rounded-[3px] border border-[#808080] bg-linear-to-b from-[#f5f5f5] to-[#e1e1e1] text-xs text-[#333333]">Image</button>
          </Check>
          <Check id="shadow" label="Shadow" />
        </div>
      </Section>
      <Section title="Options" className="pb-3 pt-[11px]">
        <div className="mt-[5px]">
          <Check id="arrows" label="Connection Arrows" checked />
          <Check id="points" label="Connection Points" checked />
          <Check id="guides" label="Guides" checked />
        </div>
      </Section>
      <Section title="Paper Size" className="pb-3 pt-[11px]">
        <div className="relative mt-[5px]">
          <select aria-label="Paper Size" className="block h-[18px] w-full appearance-none border border-[#767676] bg-[#dddddd] pl-1 text-xs leading-4 text-black">
            <option>US-Letter (8,5" x 11")</option>
          </select>
          <svg width="10" height="7" viewBox="0 0 10 7" fill="none" stroke="#000" strokeWidth="2" className="pointer-events-none absolute right-1 top-[6px]" aria-hidden="true"><path d="M0.8 1L5 5L9.2 1" /></svg>
        </div>
        <div className="mt-[5px] flex h-[27px] items-center pl-[9px] text-xs text-[#757575]">
          <input id="portrait" type="radio" name="orientation" defaultChecked className="h-[13px] w-[13px]" />
          <label htmlFor="portrait" className="pl-[6px] pt-1">Portrait</label>
          <input id="landscape" type="radio" name="orientation" className="ml-[10px] h-[13px] w-[13px]" />
          <label htmlFor="landscape" className="pl-[6px] pt-1">Landscape</label>
        </div>
      </Section>
      <Section className="flex flex-col gap-[2px] py-3">
        <button type="button" className="h-5 rounded-[3px] border border-[#767676] bg-[#efefef] text-xs leading-[18px] text-black">Edit Data</button>
        <button type="button" className="h-5 rounded-[3px] border border-[#767676] bg-[#efefef] text-xs leading-[18px] text-black">Clear Default Style</button>
      </Section>
    </aside>
  );
}

export default function App() {
  return (
    <div className="flex h-screen flex-col overflow-hidden bg-[#fbfbfb] font-['Liberation_Sans',Arial,sans-serif]">
      <Header />
      <Toolbar />
      <div className="flex min-h-0 flex-1">
        <Sidebar />
        <div className="flex w-[13px] shrink-0 items-center justify-center border-r border-[#e2e3e5] bg-[#fbfbfb]">
          <svg width="4" height="7" viewBox="0 0 4 7" stroke="#555" aria-hidden="true"><path d="M0.5 0V7M3 0V7" /></svg>
        </div>
        <Workspace />
        <FormatPanel />
      </div>
    </div>
  );
}
